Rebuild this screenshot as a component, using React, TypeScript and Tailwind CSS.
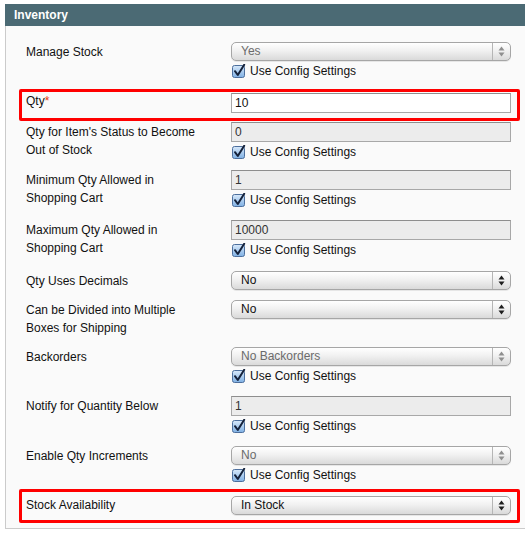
const font = { fontFamily: '"Liberation Sans", Arial, sans-serif' };

function Arrows({ dim }: { dim?: boolean }) {
  return (
    <svg width="7" height="11" viewBox="0 0 7 11">
      <path d="M3.5 0.5 L6.5 4.5 H0.5 Z M0.5 6.5 H6.5 L3.5 10.5 Z" fill={dim ? '#8f8f8f' : '#1e1e1e'} />
    </svg>
  );
}

function Select({ value, disabled }: { value: string; disabled?: boolean }) {
  return (
    <div className="flex h-[19px] w-[280px] items-center rounded-[5px] border border-[#a6a6a6] bg-[linear-gradient(to_bottom,#ffffff,#f1f1f1_45%,#dadada)] shadow-[0_1px_0_rgba(0,0,0,0.08)]">
      <span className={'flex-1 pl-[9px] text-[12px] leading-[17px] ' + (disabled ? 'text-[#6b6b6b]' : 'text-[#111]')}>
        {value}
      </span>
      <span className="flex h-full w-[18px] items-center justify-center border-l border-[#b5b5b5]">
        <Arrows dim={disabled} />
      </span>
    </div>
  );
}

function Input({ value, white }: { value: string; white?: boolean }) {
  return (
    <div
      className={
        'h-[20px] w-[280px] border border-[#a8a8a8] border-t-[#8e8e8e] px-[3px] text-[12px] leading-[18px] ' +
        (white ? 'bg-white text-[#111]' : 'bg-[#ececec] text-[#333]')
      }
    >
      {value}
    </div>
  );
}

function Check() {
  return (
    <svg width="14" height="14" viewBox="0 0 14 14" className="block">
      <defs>
        <linearGradient id="cb" x1="0" y1="0" x2="0" y2="1">
          <stop offset="0" stopColor="#d8e9fa" />
          <stop offset="1" stopColor="#7fb0e4" />
        </linearGradient>
      </defs>
      <rect x="0.5" y="1.5" width="12" height="12" rx="2" fill="url(#cb)" stroke="#4d6f9d" />
      <path d="M3 7.2 L5.8 11 L12.2 0.8" fill="none" stroke="#14213a" strokeWidth="2" strokeLinecap="round" strokeLinejoin="round" />
    </svg>
  );
}

function UseConfig() {
  return (
    <div className="mt-[2px] flex h-[16px] items-center gap-[4px] pl-[1px]">
      <Check />
      <span className="text-[12px] leading-[16px] text-[#111]">Use Config Settings</span>
    </div>
  );
}

function Row({ h, label, children }: { h: string; label: React.ReactNode; children: React.ReactNode }) {
  return (
    <div className={'flex pl-[20px] pt-[1px] ' + h}>
      <div className="w-[205px] pt-[1px] text-[12px] leading-[18px] text-[#111]">{label}</div>
      <div className="w-[280px]">{children}</div>
    </div>
  );
}

export default function App() {
  return (
    <div className="h-[536px] w-[525px] overflow-hidden bg-white pt-[4px]" style={font}>
      <div className="ml-[5px] h-[22px] bg-[#4b6a74] pl-[9px] text-[12px] font-bold leading-[22px] text-white">
        Inventory
      </div>

      <div className="ml-[5px] border-b border-l border-[#cbcbcb] bg-[#fafafa]">
        {/* Manage Stock */}
        <div className="flex h-[63px] pl-[20px] pt-[16px]">
          <div className="w-[205px] pt-[1px] text-[12px] leading-[18px] text-[#111]">Manage Stock</div>
          <div className="w-[280px]">
            <Select value="Yes" disabled />
            <UseConfig />
          </div>
        </div>

        {/* Qty — highlighted */}
        <div className="ml-[13px] flex h-[32px] w-[501px] rounded-[2px] border-[3px] border-[#ff0000] pl-[4px] pt-[1px]">
          <div className="w-[205px] text-[12px] leading-[16px] text-[#111]">
            Qty<span className="text-[#eb340a]">*</span>
          </div>
          <div className="w-[280px]">
            <Input value="10" white />
          </div>
        </div>

        <Row h="h-[48px]" label={<>Qty for Item's Status to Become<br />Out of Stock</>}>
          <Input value="0" />
          <UseConfig />
        </Row>

        <Row h="h-[50px]" label={<>Minimum Qty Allowed in<br />Shopping Cart</>}>
          <Input value="1" />
          <UseConfig />
        </Row>

        <Row h="h-[51px]" label={<>Maximum Qty Allowed in<br />Shopping Cart</>}>
          <Input value="10000" />
          <UseConfig />
        </Row>

        <Row h="h-[29px]" label="Qty Uses Decimals">
          <Select value="No" />
        </Row>

        <Row h="h-[47px]" label={<>Can be Divided into Multiple<br />Boxes for Shipping</>}>
          <Select value="No" />
        </Row>

        <Row h="h-[49px]" label="Backorders">
          <Select value="No Backorders" disabled />
          <UseConfig />
        </Row>

        <Row h="h-[50px]" label="Notify for Quantity Below">
          <Input value="1" />
          <UseConfig />
        </Row>

        <Row h="h-[44px]" label="Enable Qty Increments">
          <Select value="No" disabled />
          <UseConfig />
        </Row>

        {/* Stock Availability — highlighted */}
        <div className="ml-[13px] flex h-[34px] w-[501px] rounded-[2px] border-[3px] border-[#ff0000] pl-[4px] pt-[4px]">
          <div className="w-[205px] text-[12px] leading-[18px] text-[#111]">Stock Availability</div>
          <div className="w-[280px]">
            <Select value="In Stock" />
          </div>
        </div>

        <div className="h-[5px]" />
      </div>
    </div>
  );
}
